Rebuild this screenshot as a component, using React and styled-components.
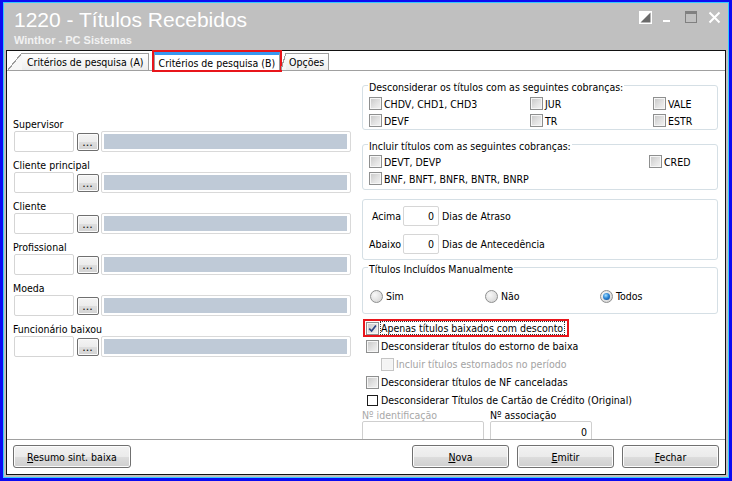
import styled, { createGlobalStyle } from "styled-components";

const UI_FONT = `"DejaVu Sans Condensed", "DejaVu Sans", "Liberation Sans", sans-serif`;
const TITLE_FONT = `"Liberation Sans", Arial, sans-serif`;

const GlobalStyle = createGlobalStyle`
  * { box-sizing: border-box; }
  html, body { margin: 0; padding: 0; background: #ffffff; }
  body { font-family: ${UI_FONT}; font-size: 10.5px; color: #000; }
`;

const Frame = styled.div`
  width: 732px;
  height: 481px;
  display: flex;
  border: 3px solid #0b0bf2;
  border-top-width: 2px;
`;

const Chrome = styled.div`
  flex: 1;
  min-height: 0;
  display: flex;
  flex-direction: column;
  border: 1px solid #35c8ff;
  background: #c0c0c0;
  padding: 0 2px 2px;
`;

const TitleBar = styled.div`
  height: 47px;
  flex-shrink: 0;
  display: flex;
  justify-content: space-between;
  padding: 5px 5px 0 8px;
`;

const TitleText = styled.div`
  display: flex;
  flex-direction: column;
`;

const Title = styled.h1`
  margin: 0;
  font: 400 21px/24px ${TITLE_FONT};
  color: #ffffff;
`;

const Subtitle = styled.div`
  margin-top: 2px;
  font: 700 11px/13px ${TITLE_FONT};
  color: #f2f2f2;
`;

const Controls = styled.div`
  display: flex;
  gap: 10px;
  margin-top: 3px;
`;

const CtrlIcon = styled.svg`
  width: 13px;
  height: 13px;
  display: block;
`;

const Panel = styled.div`
  flex: 1;
  min-height: 0;
  display: flex;
  flex-direction: column;
  border: 1px solid #111;
  background: #fff;
`;

const TabStrip = styled.div`
  height: 20px;
  flex-shrink: 0;
  display: flex;
  align-items: flex-end;
  border-bottom: 1px solid #a0a0a0;
`;

const Tab = styled.div`
  position: relative;
  height: ${(p) => (p.$active ? 18 : 17)}px;
  margin-left: ${(p) => p.$gap}px;
  padding: 0 4px 0 ${(p) => p.$padLeft}px;
  display: flex;
  align-items: center;
  white-space: nowrap;
  border: 1px solid #9c9c9c;
  border-bottom: none;
  border-left: ${(p) => (p.$slant ? "none" : "1px solid #9c9c9c")};
  border-top: ${(p) => (p.$active ? "3px solid #3797f0" : "1px solid #9c9c9c")};
  background: ${(p) => (p.$active ? "#ffffff" : "linear-gradient(#ffffff, #ededed)")};
  outline: ${(p) => (p.$marked ? "2px solid #e8151b" : "none")};

  &::before {
    content: "";
    display: ${(p) => (p.$slant ? "block" : "none")};
    position: absolute;
    top: -1px;
    bottom: 0;
    left: -${(p) => p.$slant || 0}px;
    width: ${(p) => p.$slant || 0}px;
    background: linear-gradient(
      to bottom right,
      transparent calc(50% - 0.7px),
      #9c9c9c calc(50% - 0.7px),
      #9c9c9c calc(50% + 0.5px),
      #f7f7f7 calc(50% + 0.5px)
    );
  }
`;

const Body = styled.div`
  flex: 1;
  min-height: 0;
  overflow: hidden;
  display: grid;
  grid-template-columns: 339px 356px;
  column-gap: 10px;
  padding: 0 6px;
`;

/* left column */

const FieldList = styled.div`
  padding-top: 47px;
  display: flex;
  flex-direction: column;
  gap: 7px;
`;

const Field = styled.div`
  display: flex;
  flex-direction: column;
`;

const FieldLabel = styled.label`
  height: 13px;
  line-height: 13px;
`;

const LookupRow = styled.div`
  height: 21px;
  display: flex;
  align-items: center;
  padding-left: 1px;
`;

const CodeInput = styled.input`
  width: 60px;
  height: 21px;
  border: 1px solid #d5d5d5;
  border-radius: 2px;
  background: #fff;
  font: inherit;
  padding: 0 3px;
`;

const DotsButton = styled.button`
  width: 22px;
  height: 18px;
  margin-left: 3px;
  padding: 3px 0 0;
  border: 1px solid #6f6f6f;
  border-radius: 2px;
  background: linear-gradient(#f4f4f4 0%, #ececec 50%, #dedede 51%, #d2d2d2 100%);
  box-shadow: inset 0 0 0 1px #fbfbfb;
  font: 700 9px/9px ${TITLE_FONT};
  letter-spacing: 1px;
  color: #222;
`;

const DescBox = styled.div`
  width: 250px;
  height: 21px;
  margin-left: 2px;
  padding: 2px 3px 2px 2px;
  border: 1px solid #d9d9d9;
  border-radius: 2px;
  background: #bfcad7;
  background-clip: content-box;
`;

/* right column */

const RightCol = styled.div`
  padding-top: 6px;
  display: flex;
  flex-direction: column;
`;

const Group = styled.fieldset`
  margin: ${(p) => p.$mt}px 0 0;
  padding: ${(p) => p.$pad};
  border: 1px solid #d5dfe5;
  border-radius: 3px;
  min-width: 0;
`;

const Legend = styled.legend`
  padding: 4px 1px 0;
  margin-left: -1px;
  line-height: 13px;
`;

const CheckGrid = styled.div`
  display: grid;
  grid-template-columns: ${(p) => p.$cols};
  grid-auto-rows: 17px;
  align-items: center;
`;

const CheckLabel = styled.label`
  display: inline-flex;
  align-items: center;
  gap: 1px;
  white-space: nowrap;
  color: ${(p) => (p.$disabled ? "#a3a3a3" : "#000")};
  grid-column: ${(p) => p.$span || "auto"};
  outline: ${(p) => (p.$marked ? "2px solid #e8151b" : "none")};
  height: ${(p) => (p.$marked ? "14px" : "auto")};
  padding-right: ${(p) => (p.$marked ? "2px" : "0")};
  margin-left: ${(p) => (p.$marked ? "-1px" : "0")};
  padding-left: ${(p) => (p.$marked ? "1px" : "0")};
`;

const CheckText = styled.span`
  border: 1px ${(p) => (p.$focus ? "dotted #333" : "solid transparent")};
  line-height: 12px;
  padding-right: 1px;
`;

const Box = styled.span`
  flex-shrink: 0;
  width: ${(p) => (p.$plain ? 11 : 13)}px;
  height: ${(p) => (p.$plain ? 11 : 13)}px;
  margin: ${(p) => (p.$plain ? "0 1px" : "0")};
  display: inline-flex;
  align-items: center;
  justify-content: center;
  border: 1px solid
    ${(p) => (p.$plain ? "#1c1c1c" : p.$disabled ? "#c4c4c4" : "#8e8f8f")};
  background: ${(p) =>
    p.$plain
      ? "#fff"
      : p.$disabled
      ? "#f4f4f4"
      : "linear-gradient(135deg, #c6c6c6 0%, #e2e2e2 55%, #f4f4f4 100%)"};
  box-shadow: ${(p) => (p.$plain ? "none" : "inset 0 0 0 1px #f6f6f6")};
`;

const NumGroupGrid = styled.div`
  display: grid;
  grid-template-columns: 35px 36px 1fr;
  grid-auto-rows: 20px;
  column-gap: 2px;
  row-gap: 8px;
  align-items: center;
`;

const NumLabel = styled.span`
  text-align: right;
`;

const NumInput = styled.input`
  width: 36px;
  height: 20px;
  border: 1px solid #d6d6d6;
  border-radius: 2px;
  padding: 0 4px 0 2px;
  text-align: right;
  font: inherit;
  background: #fff;
`;

const NumSuffix = styled.span`
  padding-left: 1px;
`;

const RadioGrid = styled.div`
  display: grid;
  grid-template-columns: 115px 115px 1fr;
  height: 18px;
  align-items: center;
  padding-left: 1px;
`;

const RadioLabel = styled.label`
  display: inline-flex;
  align-items: center;
  gap: 3px;
`;

const RadioDot = styled.span`
  width: 13px;
  height: 13px;
  border-radius: 50%;
  border: 1px solid #8e8f8f;
  background: radial-gradient(circle at 35% 35%, #f8f8f8 0%, #e2e2e2 55%, #cdcdcd 100%);
  display: inline-flex;
  align-items: center;
  justify-content: center;

  &::after {
    content: "";
    display: ${(p) => (p.$checked ? "block" : "none")};
    width: 7px;
    height: 7px;
    border-radius: 50%;
    background: radial-gradient(circle at 40% 35%, #a6e0ff 0%, #2c86d6 45%, #0b3f86 100%);
  }
`;

const CheckList = styled.div`
  margin-top: 5px;
  padding-left: 4px;
  display: flex;
  flex-direction: column;
`;

const CheckRow = styled.div`
  height: 18px;
  display: flex;
  align-items: center;
  padding-left: ${(p) => p.$indent || 0}px;
`;

const IdGrid = styled.div`
  display: grid;
  grid-template-columns: 122px 102px;
  column-gap: 6px;
`;

const IdLabel = styled.span`
  height: 12px;
  line-height: 12px;
  color: ${(p) => (p.$disabled ? "#a8a8a8" : "#000")};
`;

const IdInput = styled.input`
  width: 100%;
  height: 21px;
  border: 1px solid #cfcfcf;
  border-radius: 2px;
  padding: 0 4px;
  text-align: right;
  font: inherit;
  background: #fff;
`;

/* footer */

const Footer = styled.div`
  height: 35px;
  flex-shrink: 0;
  border-top: 1px solid #a0a0a0;
  padding: 5px 6px 0;
  display: flex;
  align-items: flex-start;
  gap: 8px;
`;

const Button = styled.button`
  width: ${(p) => p.$w}px;
  height: 23px;
  margin-left: ${(p) => (p.$push ? "auto" : "0")};
  padding: 0;
  border: 1px solid #707070;
  border-radius: 3px;
  background: linear-gradient(#f2f2f2 0%, #ebebeb 50%, #dddddd 51%, #cfcfcf 100%);
  box-shadow: inset 0 0 0 1px #fcfcfc;
  font: inherit;
  color: #000;
`;

const Check = ({ label, checked, disabled, plain, marked, focus, span }) => (
  <CheckLabel $disabled={disabled} $marked={marked} $span={span}>
    <Box $disabled={disabled} $plain={plain}>
      {checked && (
        <svg width="9" height="9" viewBox="0 0 9 9">
          <path d="M1.2 4.6 L3.6 7 L7.9 1.4" fill="none" stroke="#2d4785" strokeWidth="1.7" />
        </svg>
      )}
    </Box>
    <CheckText $focus={focus}>{label}</CheckText>
  </CheckLabel>
);

const Radio = ({ label, checked }) => (
  <RadioLabel>
    <RadioDot $checked={checked} />
    {label}
  </RadioLabel>
);

const Hotkey = ({ text }) => (
  <>
    <u>{text[0]}</u>
    {text.slice(1)}
  </>
);

const lookups = [
  "Supervisor",
  "Cliente principal",
  "Cliente",
  "Profissional",
  "Moeda",
  "Funcionário baixou",
];

export default function App() {
  return (
    <>
      <GlobalStyle />
      <Frame>
        <Chrome>
          <TitleBar>
            <TitleText>
              <Title>1220 - Títulos Recebidos</Title>
              <Subtitle>Winthor - PC Sistemas</Subtitle>
            </TitleText>
            <Controls>
              <CtrlIcon viewBox="0 0 13 13">
                <rect x="0.5" y="0.5" width="12" height="12" fill="#fff" stroke="#fff" />
                <polygon points="11.5,1.5 11.5,11.5 1.5,11.5" fill="#6a6a6a" />
              </CtrlIcon>
              <CtrlIcon viewBox="0 0 13 13">
                <rect x="1" y="9" width="7" height="2" fill="#fff" />
              </CtrlIcon>
              <CtrlIcon viewBox="0 0 13 13">
                <rect x="0.5" y="0.5" width="11" height="11" fill="none" stroke="#808080" />
                <rect x="0" y="0" width="12" height="3" fill="#808080" />
              </CtrlIcon>
              <CtrlIcon viewBox="0 0 13 13">
                <path d="M1.5 1.5 L11.5 11.5 M11.5 1.5 L1.5 11.5" stroke="#fff" strokeWidth="2" />
              </CtrlIcon>
            </Controls>
          </TitleBar>

          <Panel>
            <TabStrip>
              <Tab $gap={15} $slant={14} $padLeft={5}>Critérios de pesquisa (A)</Tab>
              <Tab $gap={5} $padLeft={4} $active $marked>Critérios de pesquisa (B)</Tab>
              <Tab $gap={6} $slant={5} $padLeft={3}>Opções</Tab>
            </TabStrip>

            <Body>
              <FieldList>
                {lookups.map((name) => (
                  <Field key={name}>
                    <FieldLabel>{name}</FieldLabel>
                    <LookupRow>
                      <CodeInput readOnly value="" />
                      <DotsButton>...</DotsButton>
                      <DescBox />
                    </LookupRow>
                  </Field>
                ))}
              </FieldList>

              <RightCol>
                <Group $mt={0} $pad="1px 6px 0">
                  <Legend>Desconsiderar os títulos com as seguintes cobranças:</Legend>
                  <CheckGrid $cols="161px 123px 1fr">
                    <Check label="CHDV, CHD1, CHD3" />
                    <Check label="JUR" />
                    <Check label="VALE" />
                    <Check label="DEVF" />
                    <Check label="TR" />
                    <Check label="ESTR" />
                  </CheckGrid>
                </Group>

                <Group $mt={6} $pad="0 6px 2px">
                  <Legend>Incluir títulos com as seguintes cobranças:</Legend>
                  <CheckGrid $cols="280px 1fr">
                    <Check label="DEVT, DEVP" />
                    <Check label="CRED" />
                    <Check label="BNF, BNFT, BNFR, BNTR, BNRP" span="1 / 3" />
                  </CheckGrid>
                </Group>

                <Group $mt={9} $pad="6px 0 5px 3px">
                  <NumGroupGrid>
                    <NumLabel>Acima</NumLabel>
                    <NumInput readOnly value="0" />
                    <NumSuffix>Dias de Atraso</NumSuffix>
                    <NumLabel>Abaixo</NumLabel>
                    <NumInput readOnly value="0" />
                    <NumSuffix>Dias de Antecedência</NumSuffix>
                  </NumGroupGrid>
                </Group>

                <Group $mt={-1} $pad="11px 6px 8px">
                  <Legend>Títulos Incluídos Manualmente</Legend>
                  <RadioGrid>
                    <Radio label="Sim" />
                    <Radio label="Não" />
                    <Radio label="Todos" checked />
                  </RadioGrid>
                </Group>

                <CheckList>
                  <CheckRow>
                    <Check label="Apenas títulos baixados com desconto" checked marked focus />
                  </CheckRow>
                  <CheckRow>
                    <Check label="Desconsiderar títulos do estorno de baixa" />
                  </CheckRow>
                  <CheckRow $indent={15}>
                    <Check label="Incluir títulos estornados no período" disabled />
                  </CheckRow>
                  <CheckRow>
                    <Check label="Desconsiderar títulos de NF canceladas" />
                  </CheckRow>
                  <CheckRow>
                    <Check label="Desconsiderar Títulos de Cartão de Crédito (Original)" plain />
                  </CheckRow>
                </CheckList>

                <IdGrid>
                  <IdLabel $disabled>Nº identificação</IdLabel>
                  <IdLabel>Nº associação</IdLabel>
                  <IdInput readOnly value="" />
                  <IdInput readOnly value="0" />
                </IdGrid>
              </RightCol>
            </Body>

            <Footer>
              <Button $w={118}><Hotkey text="Resumo sint. baixa" /></Button>
              <Button $w={97} $push><Hotkey text="Nova" /></Button>
              <Button $w={97}><Hotkey text="Emitir" /></Button>
              <Button $w={97}><Hotkey text="Fechar" /></Button>
            </Footer>
          </Panel>
        </Chrome>
      </Frame>
    </>
  );
}
